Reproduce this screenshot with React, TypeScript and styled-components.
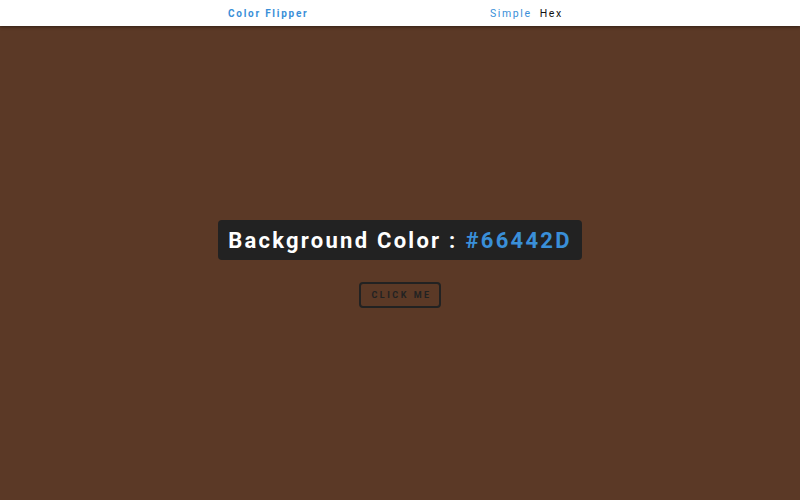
import React from "react";
import styled, { createGlobalStyle } from "styled-components";

const Global = createGlobalStyle`
  html, body { margin: 0; padding: 0; }
  body { font-family: Roboto, "Liberation Sans", sans-serif; }
  * { box-sizing: border-box; }
`;

const Page = styled.div`
  width: 800px;
  height: 500px;
  display: flex;
  flex-direction: column;
  background: #5b3926;
`;

const Nav = styled.nav`
  height: 26px;
  flex: none;
  background: #fff;
  box-shadow: 0 1px 3px rgba(0, 0, 0, 0.45);
  display: grid;
  grid-template-columns: 262px auto;
  align-items: center;
  padding-left: 228px;
  position: relative;
  z-index: 1;
`;

const Logo = styled.div`
  color: #3a8fd8;
  font-size: 10px;
  font-weight: 700;
  letter-spacing: 1.75px;
  white-space: nowrap;
  padding-top: 1px;
`;

const Links = styled.div`
  display: flex;
  gap: 8px;
`;

const NavLink = styled.a<{ $active?: boolean }>`
  font-size: 10.5px;
  letter-spacing: 1.6px;
  color: ${(p) => (p.$active ? "#3a8fd8" : "#111")};
  text-decoration: none;
  padding-top: 1px;
`;

const Main = styled.main`
  flex: 1;
  display: flex;
  flex-direction: column;
  align-items: center;
  justify-content: center;
  gap: 22px;
  padding-top: 2px;
`;

const Title = styled.h2`
  margin: 0;
  background: #222;
  color: #fff;
  border-radius: 4px;
  height: 40px;
  width: 364px;
  display: flex;
  align-items: center;
  justify-content: center;
  font-size: 22px;
  font-weight: 700;
  letter-spacing: 2.25px;
  white-space: nowrap;
  padding-top: 1px;
`;

const Hex = styled.span`
  color: #3a8fd8;
  margin-left: 8px;
`;

const Button = styled.button`
  width: 82px;
  height: 26px;
  background: transparent;
  border: 2px solid #222;
  border-radius: 4px;
  color: #222;
  font-family: Roboto, "Liberation Sans", sans-serif;
  font-size: 9px;
  font-weight: 700;
  letter-spacing: 2.5px;
  padding: 0 0 0 3px;
`;

export default function App() {
  return (
    <>
      <Global />
      <Page>
        <Nav>
          <Logo>Color Flipper</Logo>
          <Links>
            <NavLink $active>Simple</NavLink>
            <NavLink>Hex</NavLink>
          </Links>
        </Nav>
        <Main>
          <Title>
            Background Color :<Hex>#66442D</Hex>
          </Title>
          <Button>CLICK ME</Button>
        </Main>
      </Page>
    </>
  );
}
